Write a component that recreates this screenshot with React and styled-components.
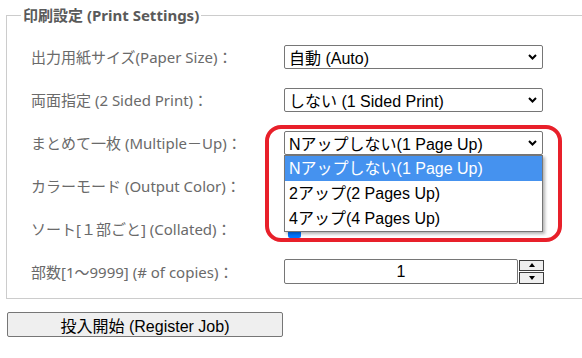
import React from 'react'
import styled, { createGlobalStyle } from 'styled-components'

const GlobalStyle = createGlobalStyle`
  html, body {
    margin: 0;
    padding: 0;
    background: #fff;
    overflow: hidden;
  }
`

const Page = styled.div`
  position: relative;
  width: 640px;
  padding: 4px 0 0 6px;
  font-family: 'Noto Sans', 'Noto Sans CJK JP', sans-serif;
`

const Fieldset = styled.fieldset`
  width: 640px;
  margin: 0;
  padding: 9px 0 5px 14px;
  border: 1px solid #cccccc;
  box-sizing: border-box;
`

const Legend = styled.legend`
  padding: 0 2px;
  font-size: 15px;
  line-height: 22px;
  font-weight: 700;
  color: #5a5a5a;
`

const Form = styled.div`
  display: grid;
  grid-template-columns: 253px auto;
  grid-auto-rows: 43px;
  align-items: center;
  padding-left: 10px;
`

const Label = styled.label`
  font-size: 15px;
  color: #6a6a6a;
  white-space: nowrap;
`

const Control = styled.div`
  position: relative;
  display: flex;
  align-items: center;
`

const SelectBox = styled.div`
  display: flex;
  align-items: center;
  justify-content: space-between;
  width: 259px;
  height: 24px;
  box-sizing: border-box;
  padding: 0 5px 0 4px;
  border: 1px solid #767676;
  border-radius: 2px;
  background: #fff;
  font-family: 'Liberation Sans', 'Noto Sans CJK JP', sans-serif;
  font-size: 16px;
  color: #000;
  white-space: nowrap;
`

const OptionList = styled.ul`
  position: absolute;
  top: 100%;
  left: 0;
  z-index: 2;
  width: 259px;
  margin: 0;
  padding: 0;
  list-style: none;
  box-sizing: border-box;
  border: 1px solid #767676;
  background: #fff;
  box-shadow: 2px 2px 3px rgba(0, 0, 0, 0.3);
`

const Option = styled.li`
  height: 25px;
  line-height: 25px;
  padding-left: 4px;
  font-family: 'Liberation Sans', 'Noto Sans CJK JP', sans-serif;
  font-size: 16px;
  white-space: nowrap;
  color: ${(p) => (p.$active ? '#fff' : '#000')};
  background: ${(p) => (p.$active ? '#4592ef' : '#fff')};
`

const Highlight = styled.div`
  position: absolute;
  left: 265px;
  top: 125px;
  width: 297px;
  height: 117px;
  box-sizing: border-box;
  border: 4px solid #e8202a;
  border-radius: 16px;
  pointer-events: none;
`

const Checkbox = styled.span`
  display: inline-block;
  width: 13px;
  height: 13px;
  margin: 6px 0 0 4px;
  border-radius: 2px;
  background: #0075ff;
`

const NumberInput = styled.input`
  width: 234px;
  height: 25px;
  box-sizing: border-box;
  margin: 0;
  border: 1px solid #767676;
  border-radius: 2px;
  text-align: center;
  font-family: 'Liberation Sans', sans-serif;
  font-size: 16px;
  color: #000;
`

const Spinner = styled.div`
  display: flex;
  flex-direction: column;
  gap: 1px;
  margin-left: 1px;
`

const SpinButton = styled.span`
  display: flex;
  align-items: center;
  justify-content: center;
  width: 25px;
  height: ${(p) => p.$h}px;
  box-sizing: border-box;
  border: 1px solid #3c3c3c;
  background: #efefef;

  &::after {
    content: '';
    border-left: 3px solid transparent;
    border-right: 3px solid transparent;
    ${(p) => (p.$down ? 'border-top: 4px solid #000;' : 'border-bottom: 4px solid #000;')}
  }
`

const SubmitButton = styled.button`
  display: block;
  width: 276px;
  height: 25px;
  margin: 13px 0 0 1px;
  padding: 0;
  border: 1px solid #767676;
  border-radius: 2px;
  background: #efefef;
  font-family: 'Liberation Sans', 'Noto Sans CJK JP', sans-serif;
  font-size: 16px;
  color: #000;
`

const Chevron = () => (
  <svg width="9" height="6" viewBox="0 0 9 6">
    <path d="M1 1 L4.5 4.5 L8 1" fill="none" stroke="#000" strokeWidth="2" />
  </svg>
)

const Select = ({ value, children }) => (
  <Control>
    <SelectBox>
      <span>{value}</span>
      <Chevron />
    </SelectBox>
    {children}
  </Control>
)

const App = () => (
  <Page>
    <GlobalStyle />
    <Fieldset>
      <Legend>印刷設定 (Print Settings)</Legend>
      <Form>
        <Label>出力用紙サイズ(Paper Size)：</Label>
        <Select value="自動 (Auto)" />

        <Label>両面指定 (2 Sided Print)：</Label>
        <Select value="しない (1 Sided Print)" />

        <Label>まとめて一枚 (Multiple－Up)：</Label>
        <Select value="Nアップしない(1 Page Up)">
          <OptionList>
            <Option $active>Nアップしない(1 Page Up)</Option>
            <Option>2アップ(2 Pages Up)</Option>
            <Option>4アップ(4 Pages Up)</Option>
          </OptionList>
        </Select>

        {/* this select sits under the open list; its text is covered */}
        <Label>カラーモード (Output Color)：</Label>
        <Select value="" />

        <Label>ソート[１部ごと] (Collated)：</Label>
        <Control>
          <Checkbox />
        </Control>

        <Label>部数[1～9999] (# of copies)：</Label>
        <Control>
          <NumberInput readOnly value="1" />
          <Spinner>
            <SpinButton $h={11} />
            <SpinButton $h={12} $down />
          </Spinner>
        </Control>
      </Form>
    </Fieldset>
    <SubmitButton>投入開始 (Register Job)</SubmitButton>
    <Highlight />
  </Page>
)

export default App
